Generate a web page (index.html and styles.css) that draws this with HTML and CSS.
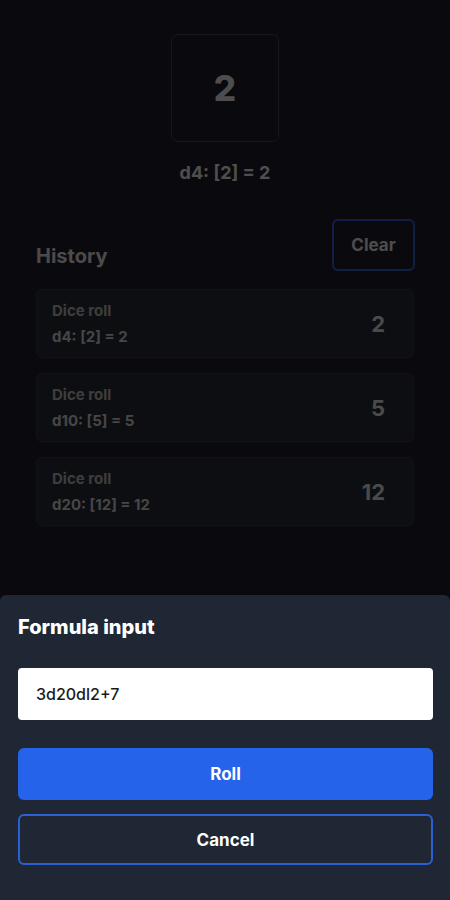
FILE: index.html
```html
<!DOCTYPE html>
<html lang="en">
<head>
  <meta charset="UTF-8" />
  <meta name="viewport" content="width=device-width, initial-scale=1.0" />
  <title>Dice Roller</title>
  <link rel="stylesheet" href="styles.css">
</head>
<body>
  <main class="app">
    <section class="current">
      <div class="die">2</div>
      <div class="formula">d4: [2] = 2</div>
    </section>

    <section class="history">
      <div class="history-head">
        <h2>History</h2>
        <button class="btn-clear">Clear</button>
      </div>

      <div class="history-list">
        <div class="roll-card">
          <div class="roll-info">
            <div class="roll-title">Dice roll</div>
            <div class="roll-detail">d4: [2] = 2</div>
          </div>
          <div class="roll-total">2</div>
        </div>
        <div class="roll-card">
          <div class="roll-info">
            <div class="roll-title">Dice roll</div>
            <div class="roll-detail">d10: [5] = 5</div>
          </div>
          <div class="roll-total">5</div>
        </div>
        <div class="roll-card">
          <div class="roll-info">
            <div class="roll-title">Dice roll</div>
            <div class="roll-detail">d20: [12] = 12</div>
          </div>
          <div class="roll-total">12</div>
        </div>
      </div>
    </section>
  </main>

  <div class="backdrop"></div>

  <div class="sheet">
    <h3>Formula input</h3>
    <input class="formula-input" type="text" value="3d20dl2+7">
    <button class="btn-roll">Roll</button>
    <button class="btn-cancel">Cancel</button>
  </div>
</body>
</html>
```

FILE: styles.css
```css
* {
  box-sizing: border-box;
  margin: 0;
  padding: 0;
}

body {
  font-family: Inter, 'Noto Sans', sans-serif;
  background-color: #191b24;
  color: #c8c8c8;
  width: 450px;
  height: 900px;
  overflow: hidden;
}

.app {
  padding: 34px 36px 0;
}

.current {
  display: flex;
  flex-direction: column;
  align-items: center;
}

.die {
  width: 108px;
  height: 108px;
  border: 1px solid #383a44;
  border-radius: 7px;
  display: flex;
  align-items: center;
  justify-content: center;
  font-size: 35px;
  font-weight: 800;
  color: #c0c0c0;
}

.formula {
  margin-top: 19px;
  font-size: 18px;
  line-height: 24px;
  font-weight: 700;
  color: #c4c4c4;
}

.history {
  margin-top: 34px;
}

.history-head {
  display: flex;
  justify-content: space-between;
  align-items: flex-end;
}

.history-head h2 {
  font-size: 20px;
  line-height: 26px;
  font-weight: 700;
  color: #bcbcbc;
  padding-bottom: 2px;
}

.btn-clear {
  width: 83px;
  height: 52px;
  background: transparent;
  border: 2px solid #2a4fb0;
  border-radius: 6px;
  font-family: inherit;
  font-size: 17px;
  font-weight: 700;
  color: #c0c0c0;
  margin-right: -1px;
}

.history-list {
  margin-top: 18px;
  display: flex;
  flex-direction: column;
  gap: 15px;
}

.roll-card {
  height: 69px;
  display: flex;
  align-items: center;
  justify-content: space-between;
  padding: 0 28px 0 15px;
  background-color: #21242d;
  border: 1px solid #2f313a;
  border-radius: 6px;
}

.roll-title {
  font-size: 15px;
  line-height: 20px;
  font-weight: 700;
  color: #9a9a9a;
}

.roll-detail {
  margin-top: 6px;
  font-size: 15px;
  line-height: 20px;
  font-weight: 700;
  color: #b0b0b0;
}

.roll-total {
  font-size: 22px;
  font-weight: 700;
  color: #b8b8b8;
}

/* modal */
.backdrop {
  position: fixed;
  inset: 0;
  background: rgba(0, 0, 0, 0.6);
}

.sheet {
  position: fixed;
  left: 0;
  right: 0;
  bottom: 0;
  height: 305px;
  background-color: #1e2733;
  border-radius: 6px 6px 0 0;
  padding: 19px 17px 0 18px;
  display: flex;
  flex-direction: column;
}

.sheet h3 {
  font-size: 20px;
  line-height: 26px;
  font-weight: 800;
  color: #ffffff;
}

.formula-input {
  margin-top: 28px;
  height: 52px;
  border: none;
  border-radius: 4px;
  background: #ffffff;
  padding: 0 18px;
  font-family: inherit;
  font-size: 16px;
  font-weight: 500;
  color: #1a1a1a;
  outline: none;
}

.btn-roll,
.btn-cancel {
  height: 52px;
  border-radius: 6px;
  font-family: inherit;
  font-size: 17px;
  font-weight: 700;
  color: #ffffff;
}

.btn-roll {
  margin-top: 28px;
  background-color: #2563eb;
  border: none;
}

.btn-cancel {
  margin-top: 14px;
  height: 51px;
  background: transparent;
  border: 2px solid #2b5fd4;
}
```
